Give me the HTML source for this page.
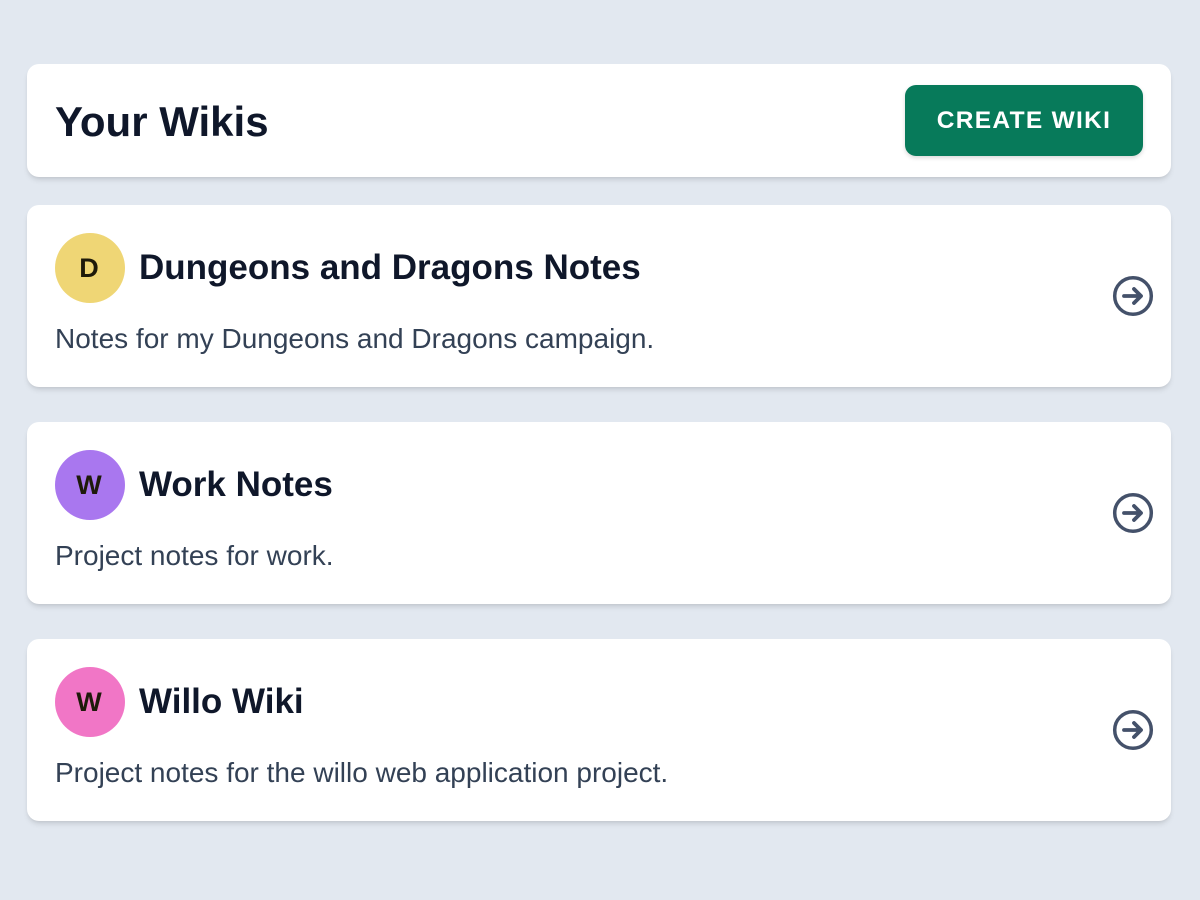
<!DOCTYPE html>
<html><head><style>
body{margin:0;width:1200px;height:900px;background:#e2e8f0;font-family:"Liberation Sans",sans-serif;position:relative;overflow:hidden}
.card{position:absolute;left:27px;width:1144px;background:#fff;border-radius:12px;box-shadow:0 4px 6px -1px rgba(0,0,0,.1),0 2px 4px -2px rgba(0,0,0,.1)}
h1{position:absolute;left:28px;top:32px;margin:0;font-size:42px;font-weight:bold;color:#0f172a;line-height:52px}
.btn{position:absolute;left:878px;top:21px;width:238px;height:71px;background:#077a5a;border-radius:11px;color:#fff;font-weight:bold;font-size:24.5px;letter-spacing:1.3px;text-align:center;line-height:71px;box-shadow:0 2px 4px rgba(0,0,0,.15)}
.av{position:absolute;left:28px;top:28px;width:68px;padding-right:2px;height:70px;border-radius:50%;text-align:center;line-height:70px;font-weight:bold;font-size:27px;color:#1e1a0a}
.t{position:absolute;left:112px;top:40px;font-size:35px;font-weight:bold;color:#0f172a;line-height:46px}
.d{position:absolute;left:28px;top:116px;font-size:28px;color:#334155;line-height:36px}
svg{position:absolute;left:1085px;top:70px}
</style></head><body>
<div class="card" style="top:64px;height:113px"><h1>Your Wikis</h1><div class="btn">CREATE WIKI</div></div>
<div class="card" style="top:205px;height:182px"><div class="av" style="background:#efd675">D</div><div class="t">Dungeons and Dragons Notes</div><div class="d">Notes for my Dungeons and Dragons campaign.</div>
<svg width="42" height="42" viewBox="0 0 42 42"><circle cx="21" cy="21" r="18.3" fill="none" stroke="#44516a" stroke-width="3.5"/><path d="M12 21H29M22 14L29 21L22 28" fill="none" stroke="#44516a" stroke-width="3.8" stroke-linecap="round" stroke-linejoin="round"/></svg></div>
<div class="card" style="top:422px;height:182px"><div class="av" style="background:#a977ef">W</div><div class="t">Work Notes</div><div class="d">Project notes for work.</div>
<svg width="42" height="42" viewBox="0 0 42 42"><circle cx="21" cy="21" r="18.3" fill="none" stroke="#44516a" stroke-width="3.5"/><path d="M12 21H29M22 14L29 21L22 28" fill="none" stroke="#44516a" stroke-width="3.8" stroke-linecap="round" stroke-linejoin="round"/></svg></div>
<div class="card" style="top:639px;height:182px"><div class="av" style="background:#f176c6">W</div><div class="t">Willo Wiki</div><div class="d">Project notes for the willo web application project.</div>
<svg width="42" height="42" viewBox="0 0 42 42"><circle cx="21" cy="21" r="18.3" fill="none" stroke="#44516a" stroke-width="3.5"/><path d="M12 21H29M22 14L29 21L22 28" fill="none" stroke="#44516a" stroke-width="3.8" stroke-linecap="round" stroke-linejoin="round"/></svg></div>
</body></html>
